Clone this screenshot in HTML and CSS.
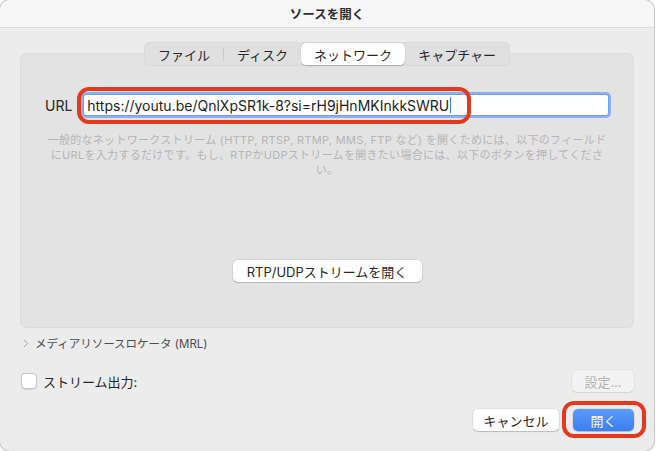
FILE: index.html
```html
<!DOCTYPE html>
<html lang="ja">
<head>
  <meta charset="UTF-8" />
  <title>ソースを開く</title>
  <link rel="stylesheet" href="styles.css">
</head>
<body>
<div class="window">
  <header class="titlebar">ソースを開く</header>
  <main class="content">
    <nav class="tabs">
      <span class="tab">ファイル</span>
      <span class="tab-sep"></span>
      <span class="tab">ディスク</span>
      <span class="tab active">ネットワーク</span>
      <span class="tab">キャプチャー</span>
    </nav>

    <section class="group">
      <div class="url-row">
        <span class="url-label">URL</span>
        <div class="url-field">
          <span class="url-text">https://youtu.be/QnlXpSR1k-8?si=rH9jHnMKInkkSWRU</span><span class="caret"></span>
          <span class="mark mark-url"></span>
        </div>
      </div>
      <p class="desc">一般的なネットワークストリーム (HTTP, RTSP, RTMP, MMS, FTP など) を開くためには、以下のフィールド<br>にURLを入力するだけです。もし、RTPかUDPストリームを開きたい場合には、以下のボタンを押してくださ<br>い。</p>
      <button class="btn rtp">RTP/UDPストリームを開く</button>
    </section>

    <div class="mrl">
      <svg width="6" height="9" viewBox="0 0 6 9"><polyline points="1,1 4.5,4.5 1,8" fill="none" stroke="#a3a3a3" stroke-width="1"/></svg>
      <span>メディアリソースロケータ (MRL)</span>
    </div>

    <div class="stream-row">
      <label class="check"><span class="box"></span>ストリーム出力:</label>
      <button class="btn settings">設定...</button>
    </div>

    <div class="actions">
      <button class="btn cancel">キャンセル</button>
      <div class="open-wrap">
        <button class="btn primary">開く</button>
        <span class="mark mark-open"></span>
      </div>
    </div>
  </main>
</div>
</body>
</html>
```

FILE: styles.css
```css
body {
  margin: 0;
  background: #fff;
  font-family: Inter, "Noto Sans CJK JP", sans-serif;
  color: #262626;
}

.window {
  width: 654px;
  height: 451px;
  background: #ececec;
  border-radius: 10px;
  overflow: hidden;
  box-shadow: 0 0 0 1px #c8c8c8;
  display: flex;
  flex-direction: column;
}

.titlebar {
  height: 27px;
  flex: none;
  background: #f6f6f6;
  border-bottom: 1px solid #dcdcdc;
  display: flex;
  align-items: center;
  justify-content: center;
  font-size: 12.5px;
  font-weight: 600;
  color: #2e2e2e;
}

.content {
  padding: 14px 20px 0;
  display: flex;
  flex-direction: column;
}

/* segmented tabs */
.tabs {
  align-self: center;
  display: flex;
  align-items: center;
  height: 24px;
  box-sizing: border-box;
  padding: 1px;
  background: #e0e0e0;
  border-radius: 6px;
  box-shadow: inset 0 0 0 0.5px #d2d2d2;
  margin-bottom: -13px;
  position: relative;
  z-index: 1;
}

.tab {
  height: 22px;
  padding: 0 13px;
  display: flex;
  align-items: center;
  font-size: 13px;
  border-radius: 5px;
}

.tab.active {
  background: #fff;
  box-shadow: 0 0.5px 1.5px rgba(0, 0, 0, 0.22);
}

.tab-sep {
  width: 1px;
  height: 13px;
  background: #c8c8c8;
}

.group {
  height: 275px;
  box-sizing: border-box;
  background: #e3e3e3;
  border: 1px solid #dcdcdc;
  border-radius: 6px;
  padding: 40px 24px 0;
  display: flex;
  flex-direction: column;
}

.url-row {
  display: flex;
  align-items: center;
  gap: 11px;
  height: 22px;
}

.url-label {
  font-size: 14px;
}

.url-field {
  flex: 1;
  height: 22px;
  box-sizing: border-box;
  background: #fff;
  border: 1px solid #6f9ced;
  box-shadow: 0 0 0 2px rgba(120, 163, 238, 0.8);
  border-radius: 3px;
  position: relative;
  display: flex;
  align-items: center;
  padding-left: 3px;
  font-size: 14px;
  color: #1d1d1d;
}

.caret {
  width: 1px;
  height: 16px;
  margin-left: 1px;
  background: #3d7bf0;
}

/* red annotation rings */
.mark {
  position: absolute;
  box-sizing: border-box;
  border: 4px solid #e23a1e;
  border-radius: 12px;
  pointer-events: none;
}

.mark-url {
  left: -7px;
  top: -8px;
  width: 394px;
  height: 37px;
}

.desc {
  margin: 17px 0 0;
  font-size: 11px;
  letter-spacing: 0.3px;
  line-height: 15px;
  color: #b5b5b5;
  text-align: center;
  white-space: nowrap;
}

.btn {
  font-family: inherit;
  font-size: 13px;
  height: 22px;
  padding: 0;
  border: none;
  border-radius: 5px;
  background: #fff;
  color: #262626;
  box-shadow: 0 0 0 0.5px rgba(0, 0, 0, 0.12), 0 1px 1px rgba(0, 0, 0, 0.16);
}

.rtp {
  align-self: center;
  width: 189px;
  margin-top: 82px;
}

.mrl {
  margin-top: 7px;
  height: 16px;
  display: flex;
  align-items: center;
  gap: 6px;
  padding-left: 3px;
  font-size: 11.5px;
  color: #4d4d4d;
}

.stream-row {
  margin-top: 19px;
  height: 22px;
  display: flex;
  align-items: center;
  justify-content: space-between;
}

.check {
  display: flex;
  align-items: center;
  gap: 6px;
  font-size: 13px;
  padding-left: 1px;
}

.box {
  width: 16px;
  height: 16px;
  box-sizing: border-box;
  background: #fff;
  border: 0.5px solid #c6c6c6;
  border-radius: 4px;
  box-shadow: 0 0.5px 1px rgba(0, 0, 0, 0.1);
}

.settings {
  width: 62px;
  color: #b4b4b4;
  background: #f2f2f2;
  box-shadow: 0 0 0 0.5px rgba(0, 0, 0, 0.07), 0 1px 1px rgba(0, 0, 0, 0.07);
}

.actions {
  margin-top: 17px;
  display: flex;
  justify-content: flex-end;
  gap: 14px;
}

.cancel {
  width: 86px;
}

.open-wrap {
  position: relative;
  display: flex;
}

.primary {
  width: 61px;
  color: #fff;
  background: linear-gradient(#5b9cf8, #3a7ef5);
}

.mark-open {
  left: -11px;
  top: -8px;
  width: 84px;
  height: 37px;
}
```
